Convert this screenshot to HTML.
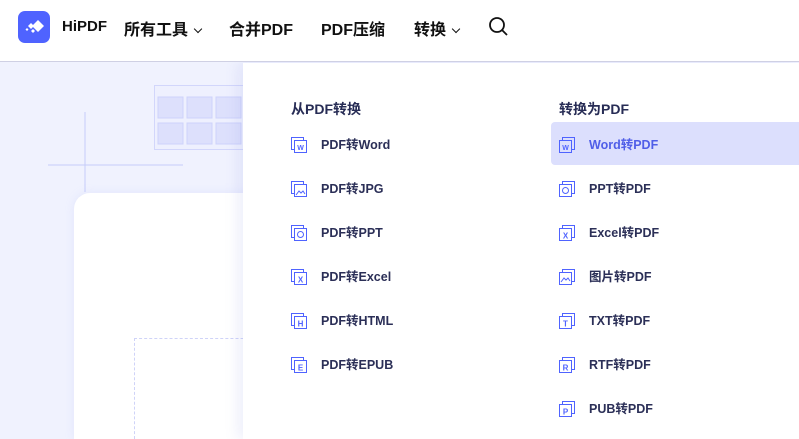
<!DOCTYPE html>
<html style="width:799px;height:439px;overflow:hidden"><head><meta charset="utf-8"><style>
*{margin:0;padding:0;box-sizing:border-box}
body{width:799px;height:439px;overflow:hidden;background:#f0f2fe;font-family:"Liberation Sans","Noto Sans CJK SC",sans-serif;position:relative}
.hdr{position:absolute;left:0;top:0;width:799px;height:62px;background:#fff;border-bottom:1px solid #cfd0e4;z-index:2}
.logo{position:absolute;left:18px;top:11px;width:32px;height:32px;border-radius:7px;background:#4f63ff}
.nav{position:absolute;top:16px;font-size:16px;color:#111;font-weight:bold}
.chev{display:inline-block;width:6px;height:6px;border-right:1.6px solid #111;border-bottom:1.6px solid #111;transform:rotate(45deg);margin-left:7px;position:relative;top:-3px}
.panel{position:absolute;left:243px;top:63px;width:556px;height:376px;background:#fff;box-shadow:-6px 0 12px rgba(120,130,220,.12)}
.h{position:absolute;font-size:14px;font-weight:bold;color:#272c55}
.it{position:absolute;font-size:12.5px;color:#2b2f57;font-weight:600;height:16px;line-height:16px}
.it svg{position:absolute;left:-30px;top:0}
.hl{position:absolute;left:551px;top:122px;width:248px;height:43px;background:#dcdffd;border-radius:4px 0 0 4px}
.card{position:absolute;left:74px;top:193px;width:200px;height:246px;background:#fff;border-radius:16px 16px 0 0;box-shadow:0 0 10px rgba(150,160,240,.15)}
</style></head><body>
<div class="hdr">
<div class="logo"><svg width="32" height="32" viewBox="0 0 32 32"><g fill="#fff"><path d="M20 9l6 6-6 6-6-6z"/><path d="M13 12l3 3-3 3-3-3z"/><path d="M15 18l2 2-2 2-2-2z"/><path d="M9 17l1.5 1.5L9 20l-1.5-1.5z"/></g></svg></div>
<div class="nav" style="left:62px;font-size:15px;top:18px">HiPDF</div>
<div class="nav" style="left:124px">所有工具<span class="chev"></span></div>
<div class="nav" style="left:229px">合并PDF</div>
<div class="nav" style="left:321px">PDF压缩</div>
<div class="nav" style="left:414px">转换<span class="chev"></span></div>
<svg style="position:absolute;left:488px;top:16px" width="22" height="22" viewBox="0 0 22 22"><circle cx="9" cy="9" r="7" fill="none" stroke="#111" stroke-width="1.8"/><path d="M14 14l5 5" stroke="#111" stroke-width="1.8"/></svg>
</div>
<svg style="position:absolute;left:40px;top:80px" width="210" height="120"><path d="M45 32v80M8 85h135" stroke="#c6ccf9" stroke-width="1"/><circle cx="250" cy="85" r="35" fill="#e3e6fd"/><rect x="114.5" y="5.5" width="100" height="64" fill="#eef0fe" stroke="#d2d6fb"/><g fill="#dde0fc" stroke="#cdd2fb"><rect x="118" y="17" width="25" height="21"/><rect x="147" y="17" width="25" height="21"/><rect x="176" y="17" width="25" height="21"/><rect x="118" y="43" width="25" height="21"/><rect x="147" y="43" width="25" height="21"/><rect x="176" y="43" width="25" height="21"/></g></svg>
<div class="card"><div style="position:absolute;left:60px;top:145px;width:140px;height:101px;border:1px dashed #cfd3f8;border-right:none;border-bottom:none"></div></div>
<div class="panel"></div>
<div class="hl"></div>
<div class="h" style="left:291px;top:99px">从PDF转换</div>
<div class="h" style="left:559px;top:99px">转换为PDF</div>
<div class="it" style="left:321px;top:137px"><svg width="16" height="16"><rect x=".5" y=".5" width="12" height="12" fill="#fff" stroke="#4f63ff"/><rect x="3.5" y="3.5" width="12" height="12" fill="#fff" stroke="#4f63ff"/><text x="9.5" y="13" font-size="7" text-anchor="middle" fill="#4f63ff">W</text></svg>PDF转Word</div>
<div class="it" style="left:321px;top:181px"><svg width="16" height="16"><rect x=".5" y=".5" width="12" height="12" fill="#fff" stroke="#4f63ff"/><rect x="3.5" y="3.5" width="12" height="12" fill="#fff" stroke="#4f63ff"/><path d="M5 14l3-4 2 2 2-2 2 3" stroke="#4f63ff" fill="none"/></svg>PDF转JPG</div>
<div class="it" style="left:321px;top:225px"><svg width="16" height="16"><rect x=".5" y=".5" width="12" height="12" fill="#fff" stroke="#4f63ff"/><rect x="3.5" y="3.5" width="12" height="12" fill="#fff" stroke="#4f63ff"/><circle cx="9.5" cy="9.5" r="3" fill="none" stroke="#4f63ff"/></svg>PDF转PPT</div>
<div class="it" style="left:321px;top:269px"><svg width="16" height="16"><rect x=".5" y=".5" width="12" height="12" fill="#fff" stroke="#4f63ff"/><rect x="3.5" y="3.5" width="12" height="12" fill="#fff" stroke="#4f63ff"/><text x="9.5" y="13.5" font-size="8" text-anchor="middle" fill="#4f63ff">X</text></svg>PDF转Excel</div>
<div class="it" style="left:321px;top:313px"><svg width="16" height="16"><rect x=".5" y=".5" width="12" height="12" fill="#fff" stroke="#4f63ff"/><rect x="3.5" y="3.5" width="12" height="12" fill="#fff" stroke="#4f63ff"/><text x="9.5" y="13.5" font-size="8" text-anchor="middle" fill="#4f63ff">H</text></svg>PDF转HTML</div>
<div class="it" style="left:321px;top:357px"><svg width="16" height="16"><rect x=".5" y=".5" width="12" height="12" fill="#fff" stroke="#4f63ff"/><rect x="3.5" y="3.5" width="12" height="12" fill="#fff" stroke="#4f63ff"/><text x="9.5" y="13.5" font-size="8" text-anchor="middle" fill="#4f63ff">E</text></svg>PDF转EPUB</div>
<div class="it" style="left:589px;top:137px;color:#4f5ee8"><svg width="16" height="16"><rect x="3.5" y=".5" width="12" height="12" fill="#dcdffd" stroke="#4f63ff"/><rect x=".5" y="3.5" width="12" height="12" fill="#dcdffd" stroke="#4f63ff"/><text x="6.5" y="13" font-size="7" text-anchor="middle" fill="#4f63ff">W</text></svg>Word转PDF</div>
<div class="it" style="left:589px;top:181px"><svg width="16" height="16"><rect x="3.5" y=".5" width="12" height="12" fill="#fff" stroke="#4f63ff"/><rect x=".5" y="3.5" width="12" height="12" fill="#fff" stroke="#4f63ff"/><circle cx="6.5" cy="9.5" r="3" fill="none" stroke="#4f63ff"/></svg>PPT转PDF</div>
<div class="it" style="left:589px;top:225px"><svg width="16" height="16"><rect x="3.5" y=".5" width="12" height="12" fill="#fff" stroke="#4f63ff"/><rect x=".5" y="3.5" width="12" height="12" fill="#fff" stroke="#4f63ff"/><text x="6.5" y="13.5" font-size="8" text-anchor="middle" fill="#4f63ff">X</text></svg>Excel转PDF</div>
<div class="it" style="left:589px;top:269px"><svg width="16" height="16"><rect x="3.5" y=".5" width="12" height="12" fill="#fff" stroke="#4f63ff"/><rect x=".5" y="3.5" width="12" height="12" fill="#fff" stroke="#4f63ff"/><path d="M2 13l3-4 2 2 2-2 2 3" stroke="#4f63ff" fill="none"/></svg>图片转PDF</div>
<div class="it" style="left:589px;top:313px"><svg width="16" height="16"><rect x="3.5" y=".5" width="12" height="12" fill="#fff" stroke="#4f63ff"/><rect x=".5" y="3.5" width="12" height="12" fill="#fff" stroke="#4f63ff"/><text x="6.5" y="13.5" font-size="8" text-anchor="middle" fill="#4f63ff">T</text></svg>TXT转PDF</div>
<div class="it" style="left:589px;top:357px"><svg width="16" height="16"><rect x="3.5" y=".5" width="12" height="12" fill="#fff" stroke="#4f63ff"/><rect x=".5" y="3.5" width="12" height="12" fill="#fff" stroke="#4f63ff"/><text x="6.5" y="13.5" font-size="8" text-anchor="middle" fill="#4f63ff">R</text></svg>RTF转PDF</div>
<div class="it" style="left:589px;top:401px"><svg width="16" height="16"><rect x="3.5" y=".5" width="12" height="12" fill="#fff" stroke="#4f63ff"/><rect x=".5" y="3.5" width="12" height="12" fill="#fff" stroke="#4f63ff"/><text x="6.5" y="13.5" font-size="8" text-anchor="middle" fill="#4f63ff">P</text></svg>PUB转PDF</div>
</body></html>
